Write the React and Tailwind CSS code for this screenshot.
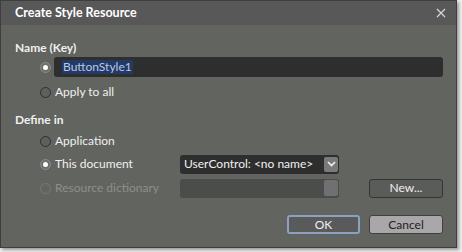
import React from 'react';

const Radio = ({ checked, disabled }) => (
  <span
    className={`flex items-center justify-center w-[11px] h-[11px] rounded-full border ${
      disabled ? 'border-[#777875]' : checked ? 'border-[#8a8a8a] bg-[#6e6e6e]' : 'border-[#2f302e] bg-[#5e605c]'
    }`}
  >
    {checked && <span className="w-[5px] h-[5px] rounded-full bg-white" />}
  </span>
);

const Chevron = () => (
  <svg width="9" height="6" viewBox="0 0 9 6">
    <path d="M1 1l3.5 3.5L8 1" fill="none" stroke="#f2f2f2" strokeWidth="1.6" />
  </svg>
);

const App = () => {
  return (
    <div className="w-[462px] h-[252px] bg-[#eeeeee] font-['Lato',sans-serif] text-[12px] text-[#f0f0f0]">
      <div className="flex flex-col w-[457px] h-[248px] border border-[#3e3e3e] bg-[#62645f] shadow-[2px_2px_3px_rgba(0,0,0,0.35)]">
        {/* Title bar */}
        <div className="flex items-center justify-between h-[24px] pl-[14px] pr-[10px] bg-[#585858]">
          <span className="text-[12.5px] font-bold text-white">Create Style Resource</span>
          <svg width="10" height="10" viewBox="0 0 10 10">
            <path d="M1 1l8 8M9 1l-8 8" stroke="#d8d8d8" strokeWidth="1.2" />
          </svg>
        </div>

        {/* Body */}
        <div className="flex flex-col pl-[14px] pr-[13px] pt-[15px]">
          <div className="flex items-center h-[16px] font-bold">Name (Key)</div>

          <div className="flex items-center h-[20px] mt-[1px] pl-[25px]">
            <Radio checked />
            <div className="flex items-center flex-1 h-[20px] ml-[3px] pl-[8px] rounded-[3px] bg-[#2e2e2e]">
              <span className="px-[1px] leading-[14px] bg-[#233a66] text-[#b9c8e6]">ButtonStyle1</span>
            </div>
          </div>

          <div className="flex items-center h-[20px] mt-[5px] pl-[25px]">
            <Radio />
            <span className="ml-[4px]">Apply to all</span>
          </div>

          <div className="flex items-center h-[16px] mt-[10px] font-bold">Define in</div>

          <div className="flex items-center h-[20px] mt-[3px] pl-[25px]">
            <Radio />
            <span className="ml-[4px]">Application</span>
          </div>

          <div className="flex items-center h-[20px] mt-[3px] pl-[25px]">
            <Radio checked />
            <span className="w-[125px] ml-[4px]">This document</span>
            <div className="flex items-center justify-between w-[159px] h-[19px] pl-[4px] pr-[1px] rounded-[3px] bg-[#2e2e2e]">
              <span>UserControl: &lt;no name&gt;</span>
              <span className="flex items-center justify-center w-[14px] h-[15px] rounded-[2px] bg-[#7a7a7a]">
                <Chevron />
              </span>
            </div>
          </div>

          <div className="flex items-center h-[20px] mt-[4px] pl-[25px]">
            <Radio disabled />
            <span className="w-[125px] ml-[4px] text-[#8d8f8b]">Resource dictionary</span>
            <div className="flex items-center justify-end w-[159px] h-[19px] pr-[1px] rounded-[3px] bg-[#4b4d4a]">
              <span className="w-[14px] h-[16px] rounded-[2px] bg-[#706f71]" />
            </div>
            <div className="flex-1" />
            <button className="flex items-center justify-center w-[74px] h-[19px] rounded-[3px] border border-[#353535] bg-[#5a5c59] text-[#f0f0f0]">
              New...
            </button>
          </div>

          <div className="flex justify-end gap-[9px] mt-[17px]">
            <button className="flex items-center justify-center w-[73px] h-[19px] rounded-[3px] border-2 border-[#8aa2bf] bg-[#5a5a5a] text-[#f0f0f0]">
              OK
            </button>
            <button className="flex items-center justify-center w-[74px] h-[19px] rounded-[3px] border border-[#404040] bg-[#a9a7a9] text-[#1e1e1e]">
              Cancel
            </button>
          </div>
        </div>
      </div>
    </div>
  );
};

export default App;
